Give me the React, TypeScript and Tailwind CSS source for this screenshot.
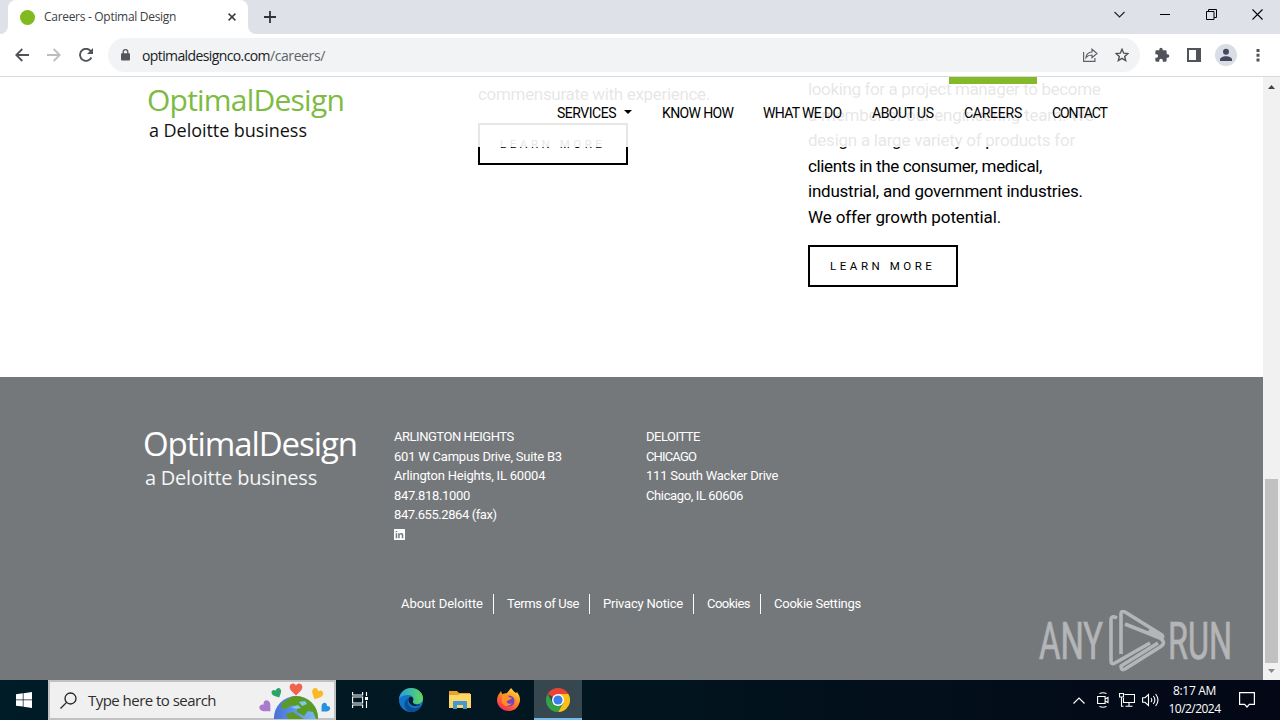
import React from 'react';

interface NavItem {
  label: string;
  className: string;
  caret?: boolean;
  active?: boolean;
}

const navItems: NavItem[] = [
  { label: 'SERVICES', className: 'w-[75px] tracking-[-0.48px]', caret: true },
  { label: 'KNOW HOW', className: 'w-[71px] tracking-[-0.63px]' },
  { label: 'WHAT WE DO', className: 'w-[79px] tracking-[-0.65px]' },
  { label: 'ABOUT US', className: 'w-[62px] tracking-[-0.5px]' },
  { label: 'CAREERS', className: 'w-[58px] tracking-[-0.25px]', active: true },
  { label: 'CONTACT', className: 'w-[55px] tracking-[-1.15px]' },
];

const projectManagerText = [
  { text: 'looking for a project manager to become', className: 'tracking-[-0.37px]' },
  { text: 'a member of our engineering team. We', className: 'tracking-[-0.22px]' },
  { text: 'design a large variety of products for', className: 'tracking-[-0.25px]' },
  { text: 'clients in the consumer, medical,', className: 'tracking-[-0.35px]' },
  { text: 'industrial, and government industries.', className: 'tracking-[-0.23px]' },
  { text: 'We offer growth potential.', className: 'tracking-[-0.11px]' },
];

const arlington = [
  { text: 'ARLINGTON HEIGHTS', className: 'tracking-[-0.47px]' },
  { text: '601 W Campus Drive, Suite B3', className: 'tracking-[-0.22px]' },
  { text: 'Arlington Heights, IL 60004', className: 'tracking-[-0.19px]' },
  { text: '847.818.1000', className: 'tracking-[-0.33px]' },
  { text: '847.655.2864 (fax)', className: 'tracking-[-0.42px]' },
];

const chicago = [
  { text: 'DELOITTE', className: 'tracking-[-0.48px]' },
  { text: 'CHICAGO', className: 'tracking-[-0.85px]' },
  { text: '111 South Wacker Drive', className: 'tracking-[-0.24px]' },
  { text: 'Chicago, IL 60606', className: 'tracking-[-0.38px]' },
];

const legalLinks = [
  { text: 'About Deloitte', className: 'w-[93px] border-r tracking-[-0.03px]' },
  { text: 'Terms of Use', className: 'w-[83px] border-r tracking-[-0.41px]' },
  { text: 'Privacy Notice', className: 'w-[91px] border-r tracking-[-0.22px]' },
  { text: 'Cookies', className: 'w-[54px] border-r tracking-[-0.52px]' },
  { text: 'Cookie Settings', className: 'w-[88px] tracking-[-0.24px]' },
];

const TabStrip = () => (
  <div className="flex h-[34px] shrink-0 bg-[#dee1e8] pl-2">
    <div className="relative flex w-[240px] items-center rounded-t-lg bg-white pl-[12px]">
      <svg className="absolute -left-2 bottom-0 h-2 w-2" viewBox="0 0 8 8">
        <path d="M8 0v8H0a8 8 0 0 0 8-8z" fill="#fff" />
      </svg>
      <svg className="absolute -right-2 bottom-0 h-2 w-2" viewBox="0 0 8 8">
        <path d="M0 0v8h8a8 8 0 0 1-8-8z" fill="#fff" />
      </svg>
      <span className="h-[15px] w-[15px] rounded-full bg-[#7fba1e]" />
      <span className="ml-[9px] w-[184px] text-xs tracking-[-0.3px] whitespace-nowrap text-[#3c4043]">Careers - Optimal Design</span>
      <svg className="h-2 w-2" viewBox="0 0 8 8" stroke="#3c4043" strokeWidth="1.5">
        <path d="M.6.6l6.8 6.8M7.4.6L.6 7.4" />
      </svg>
    </div>
    <svg className="mt-[11px] ml-4 h-3 w-3" viewBox="0 0 12 12" stroke="#303338" strokeWidth="1.8">
      <path d="M6 0v12M0 6h12" />
    </svg>
    <div className="mt-[9px] ml-auto flex h-[11px] items-center pr-[17px]">
      <svg className="h-[11px] w-[11px]" viewBox="0 0 11 11" fill="none" stroke="#222" strokeWidth="1.1">
        <path d="M.5 3l5 5 5-5" />
      </svg>
      <svg className="ml-[35px] h-[11px] w-[10px]" viewBox="0 0 10 11">
        <path d="M0 5h10v1H0z" />
      </svg>
      <svg className="ml-[36px] h-[11px] w-[11px]" viewBox="0 0 11 11" fill="none" stroke="#000">
        <path d="M.5 2.5H8v8H.5zM2.5 2.5v-2h8v8H8" />
      </svg>
      <svg className="ml-[35px] h-[11px] w-[11px]" viewBox="0 0 11 11" stroke="#000" strokeWidth="1.1">
        <path d="M.5.5l10 10M10.5.5l-10 10" />
      </svg>
    </div>
  </div>
);

const Toolbar = () => (
  <div className="flex h-[43px] shrink-0 items-center border-b border-[#d8dadc] bg-white pl-[15px]">
    <svg className="h-[14px] w-[14px]" viewBox="0 0 14 14" fill="none" stroke="#505357" strokeWidth="1.8">
      <path d="M14 7H1.5M7.3 1l-6 6 6 6" />
    </svg>
    <svg className="ml-[18px] h-[14px] w-[14px]" viewBox="0 0 14 14" fill="none" stroke="#bbbdc0" strokeWidth="1.8">
      <path d="M0 7h12.5M6.7 1l6 6-6 6" />
    </svg>
    <svg className="ml-[18px] h-[14px] w-[14px]" viewBox="0 0 14 14" fill="none" stroke="#505357" strokeWidth="1.9">
      <path d="M12.4 9.5A6 6 0 1 1 11.5 2.8l1 1.2" />
      <path d="M14 0v6H8z" fill="#505357" stroke="none" />
    </svg>
    <div className="ml-[15px] flex h-[34px] w-[1032px] items-center rounded-full bg-[#f1f3f4] pl-[13px]">
      <svg className="h-[12px] w-[9px]" viewBox="0 0 9 12">
        <path d="M2.2 5V3a2.3 2.3 0 0 1 4.6 0v2" fill="none" stroke="#53565a" strokeWidth="1.3" />
        <rect y="4.3" width="9" height="7.3" rx="1" fill="#53565a" />
      </svg>
      <span className="ml-[12px] w-[940px] text-[14px] whitespace-nowrap text-[#5f6368]">
        <span className="tracking-[-0.61px] text-[#202124]">optimaldesignco.com</span>
        <span className="tracking-[-0.4px]">/careers/</span>
      </span>
      <svg className="ml-[1px] h-[14px] w-[15px] shrink-0" viewBox="0 0 15 14" fill="none" stroke="#5f6368" strokeWidth="1.2">
        <path d="M.6 4v9.3h11.3V10" />
        <path d="M3 9.500c.4-3.500 2.500-5.300 6-5.500V1.200l5 4.300-5 4.200V7c-2.800 0-4.500.7-6 2.500z" />
      </svg>
      <svg className="ml-[17px] h-[14px] w-[14px] shrink-0" viewBox="0 0 14 14" fill="none" stroke="#505357" strokeWidth="1.4">
        <path d="M7 1.300l1.700 3.900 4.200.4-3.200 2.800 1 4.200L7 10.400l-3.700 2.200 1-4.200L1.100 5.600l4.200-.4z" />
      </svg>
    </div>
    <svg className="ml-[14px] h-[16px] w-[16px]" viewBox="0 0 24 24" fill="#505357">
      <path d="M20.500 11H19V7a2 2 0 0 0-2-2h-4V3.500a2.500 2.500 0 0 0-5 0V5H4a2 2 0 0 0-2 2v3.800h1.500a2.700 2.700 0 0 1 0 5.400H2V20a2 2 0 0 0 2 2h3.800v-1.500a2.700 2.700 0 0 1 5.400 0V22H17a2 2 0 0 0 2-2v-4h1.500a2.500 2.500 0 0 0 0-5z" />
    </svg>
    <svg className="ml-[17px] h-[14px] w-[14px]" viewBox="0 0 14 14">
      <path d="M0 0h14v14H0zM2 2v10h7V2z" fill="#505357" fillRule="evenodd" />
    </svg>
    <svg className="ml-[14px] h-[22px] w-[22px]" viewBox="0 0 22 22">
      <circle cx="11" cy="11" r="11" fill="#dadce6" />
      <circle cx="11" cy="7.700" r="3" fill="#43485c" />
      <path d="M5 17v-1.500c0-2 3-3.300 6-3.300s6 1.300 6 3.300V17z" fill="#43485c" />
    </svg>
    <svg className="ml-[19px] h-[14px] w-[4px]" viewBox="0 0 4 14" fill="#505357">
      <path d="M.5 1h3v3h-3zM.5 5.800h3v3h-3zM.5 10.500h3v3h-3z" />
    </svg>
  </div>
);

const SiteHeader = () => (
  <header className="absolute inset-x-0 top-0 flex h-[70px] bg-white/90">
    <div className="ml-[147px] w-[410px] font-['Open_Sans'] whitespace-nowrap">
      <div className="mt-[3px] text-[30px] leading-[40px] tracking-[-0.78px] text-[#7dbb42]">OptimalDesign</div>
      <div className="-mt-px ml-[2px] text-[18px] leading-[22px] tracking-[-0.05px] text-[#111]">a Deloitte business</div>
    </div>
    <nav className="flex gap-[30px] text-[14px] leading-[20px]">
      {navItems.map(item => (
        <a key={item.label} className={`relative flex pt-[26px] whitespace-nowrap ${item.className}`}>
          {item.active && <span className="absolute top-0 -left-[15px] h-[7px] w-[88px] bg-[#86b92a]" />}
          {item.label}
          {item.caret && (
            <svg className="mt-[7px] ml-auto h-1 w-2" viewBox="0 0 8 4">
              <path d="M0 0h8L4 4z" />
            </svg>
          )}
        </a>
      ))}
    </nav>
  </header>
);

const LearnMore = () => (
  <div className="mt-[15px] flex h-[42px] w-[150px] items-center border-2 border-black pt-[2px] pl-[20px] text-[11.5px] tracking-[3.55px] whitespace-nowrap">
    LEARN MORE
  </div>
);

const FooterLogo = () => (
  <div className="-mt-[5px] w-[250px] font-['Open_Sans'] whitespace-nowrap">
    <div className="-ml-px text-[33px] leading-[44px] tracking-[-1.07px]">OptimalDesign</div>
    <div className="ml-[1px] text-[20px] leading-[24px] tracking-[-0.24px] text-[#f4f5f5]">a Deloitte business</div>
  </div>
);

const Footer = () => (
  <footer className="h-[303px] bg-[#75787b] pt-[50px] text-[13px] leading-[19.5px] text-white">
    <div className="flex h-[167px] pl-[144px]">
      <FooterLogo />
      <div className="w-[252px]">
        {arlington.map(line => (
          <div key={line.text} className={`whitespace-nowrap ${line.className}`}>{line.text}</div>
        ))}
        <svg className="mt-[4px] h-[11px] w-[11px]" viewBox="0 0 11 11">
          <rect width="11" height="11" rx=".6" fill="#fff" />
          <path d="M1.700 4.200h1.500v5H1.700zM1.700 1.900h1.500v1.400H1.700zM4.200 4.200h1.400v.7c.9-1.300 3.700-1.200 3.700 1.200v3.100H7.800V6.500c0-1.500-2.100-1.400-2.100 0v2.700H4.200z" fill="#75787b" />
        </svg>
      </div>
      <div>
        {chicago.map(line => (
          <div key={line.text} className={`whitespace-nowrap ${line.className}`}>{line.text}</div>
        ))}
      </div>
    </div>
    <div className="flex gap-[13px] pl-[401px]">
      {legalLinks.map(link => (
        <a key={link.text} className={`h-[20px] border-white whitespace-nowrap ${link.className}`}>{link.text}</a>
      ))}
    </div>
  </footer>
);

const Watermark = () => (
  <svg className="absolute right-[47px] bottom-[8px] h-[62px] w-[196px] opacity-45" viewBox="0 0 196 62" fill="none" stroke="#fff">
    <g fill="#fff" strokeWidth=".7" fontFamily="Roboto, sans-serif" fontSize="52">
      <text x="2" y="49" textLength="64" lengthAdjust="spacingAndGlyphs">ANY</text>
      <text x="131" y="49" textLength="64" lengthAdjust="spacingAndGlyphs">RUN</text>
    </g>
    <path
      strokeWidth="3.600"
      strokeLinejoin="round"
      d="M80 8Q74 5 74 10V51Q74 55 78 53L113 33M84 44V4Q84 0 88 2L125 25Q127 28 123 28L88 14M112 20L123 28Q130 33 123 37L88 59Q84 61 84 56L121 33"
    />
  </svg>
);

const Scrollbar = () => (
  <div className="flex w-[17px] flex-col items-center bg-[#f1f1f1]">
    <svg className="mt-[8px] h-[4px] w-[7px]" viewBox="0 0 7 4">
      <path d="M3.500 0L7 4H0z" fill="#444" />
    </svg>
    <div className="mt-[390px] h-[184px] w-[13px] bg-[#c1c1c1]" />
    <svg className="mt-[6px] h-[4px] w-[7px]" viewBox="0 0 7 4">
      <path d="M3.500 4L7 0H0z" fill="#8a8a8a" />
    </svg>
  </div>
);

const hearts = [
  { color: '#2ea366', transform: 'translate(18 11) rotate(-25) scale(.78)' },
  { color: '#f0634d', transform: 'translate(37 7)' },
  { color: '#fbb928', transform: 'translate(58 12) rotate(25) scale(.9)' },
  { color: '#a97bd0', transform: 'translate(7 25) rotate(-45) scale(.95)' },
  { color: '#2591e0', transform: 'translate(66 26) rotate(45) scale(.75)' },
];

const Globe = () => (
  <svg className="ml-auto h-[37px] w-[74px]" viewBox="0 0 74 37">
    <defs>
      <clipPath id="globe">
        <circle cx="37" cy="36" r="22" />
      </clipPath>
      <linearGradient id="ocean" x1="0" x2="1">
        <stop offset="0" stopColor="#4870d8" />
        <stop offset="1" stopColor="#79bdf3" />
      </linearGradient>
    </defs>
    <circle cx="37" cy="36" r="22" fill="url(#ocean)" />
    <g clipPath="url(#globe)" fill="#5b9b25">
      <path d="M23 21l12-8 14 1 11 10 3 13h-6l-3-7-5-1-4 5-7-4v-4l-5-3-7 4-4-1z" />
      <path d="M27 32l7-2 6 4 5 3H29z" />
      <path d="M40 20l6-1 2 3-5 2zM32 25l7-2 3 3-5 1z" fill="#82c4f4" />
    </g>
    {hearts.map(heart => (
      <path key={heart.color} d="M0 6.500L-5 1.500C-9-4-3-8 0-3.500 3-8 9-4 5 1.500z" fill={heart.color} transform={heart.transform} />
    ))}
  </svg>
);

const Taskbar = () => (
  <div className="flex h-10 shrink-0 items-center bg-gradient-to-r from-[#001c26] via-[#02151f] to-[#030716] text-white">
    <svg className="ml-4 h-4 w-4" viewBox="0 0 16 16" fill="#fff">
      <path d="M0 2.200l6.800-.9v6.200H0zM7.500 1.200L16 0v7.500H7.500zM0 8.300h6.800v6.200L0 13.700zM7.500 8.300H16V16l-8.500-1.200z" />
    </svg>
    <div className="ml-4 flex h-10 w-[288px] items-center border-2 border-[#bfc1c2] bg-[#f0f0f0] pr-[1px] pl-[10px]">
      <svg className="h-[17px] w-[17px]" viewBox="0 0 17 17" fill="none" stroke="#222" strokeWidth="1.300">
        <circle cx="10.500" cy="6.500" r="5.500" />
        <path d="M6.600 10.400L.5 16.500" />
      </svg>
      <span className="ml-[11px] text-[15px] tracking-[-0.53px] whitespace-nowrap text-[#2e2e2e]">Type here to search</span>
      <Globe />
    </div>
    <svg className="ml-4 h-4 w-4" viewBox="0 0 16 16" fill="none" stroke="#fff" strokeWidth="1.100">
      <path d="M.6 0v3h10V0M.6 5h10v6H.6zM.6 16v-3h10v3M14.500 0v4M14.500 9v7" />
      <path d="M13 5h3v3h-3z" fill="#fff" stroke="none" />
    </svg>
    {/* Edge */}
    <svg className="ml-[31px] h-6 w-6" viewBox="0 0 24 24">
      <defs>
        <linearGradient id="edgeTop" x1="0" x2="1">
          <stop offset="0" stopColor="#229fdc" />
          <stop offset="1" stopColor="#62d85c" />
        </linearGradient>
      </defs>
      <circle cx="12" cy="12" r="12" fill="#1273ca" />
      <path d="M0 11C1 4 6 0 12 0c7 0 12 5 12 10 0 4-3 6-6 6-3 0-5-1-4-3 2-3-1-6-5-6-4 0-7 1-9 4z" fill="url(#edgeTop)" />
      <path d="M9.500 10c-3 6 2 11 8 10 2 0 4-2 5-3-2 5-6 7-10 7C5 24 3 13 9.500 10z" fill="#0c4f91" />
      <path d="M14 13c1-3-1-5-3.500-4-2 2-1 7 3 8.500 3 1 6 .5 8-1.200-4 1.200-8.500-.3-7.500-3.300z" fill="#03202d" />
    </svg>
    {/* File Explorer */}
    <svg className="ml-[26px] h-[18px] w-[22px]" viewBox="0 0 22 18">
      <path d="M0 0h8l2 2h11v4H0z" fill="#e9a32a" />
      <path d="M0 4h9l2-1h11v14H0z" fill="#fcd667" />
      <path d="M4 18v-7q0-1 1-1h12q1 0 1 1v7h-4v-4H8v4z" fill="#4099d5" />
    </svg>
    {/* Firefox */}
    <svg className="ml-[26px] h-6 w-6" viewBox="0 0 24 24">
      <defs>
        <linearGradient id="fox" x1=".8" y1="0" x2=".2" y2="1">
          <stop offset="0" stopColor="#ffe442" />
          <stop offset=".45" stopColor="#ff8a22" />
          <stop offset="1" stopColor="#f5215b" />
        </linearGradient>
      </defs>
      <path d="M2 6l2-3 1 3 5-1 4-5c2 2 3 4 5 5l1-1c3 4 4 8 2 12-2 5-6 7-10 7-7 0-12-5-12-11 0-2 1-5 2-6z" fill="url(#fox)" />
      <circle cx="12" cy="13" r="5.500" fill="#7541c9" />
      <path d="M5 8c3-2 6-1 7 1l3 1c-1 2-4 2-5 3-1 2 2 4 5 2-2 4-9 4-10-1z" fill="#ff8f25" />
    </svg>
    {/* Chrome */}
    <div className="ml-[13px] flex h-10 w-12 items-center justify-center border-b-2 border-[#76b9ed] bg-[#37474f]">
      <svg className="mt-[2px] h-6 w-6" viewBox="0 0 24 24">
        <path d="M12 12L1.600 6A12 12 0 0 1 22.400 6z" fill="#ea4335" />
        <path d="M12 12V6h10.400A12 12 0 0 1 12 24l5.200-9z" fill="#fbc116" />
        <path d="M1.600 6A12 12 0 0 0 12 24l5.200-9L12 12l-5.200 3z" fill="#34a047" />
        <circle cx="12" cy="12" r="6" fill="#fff" />
        <circle cx="12" cy="12" r="4.600" fill="#3b7ded" />
      </svg>
    </div>
    <svg className="ml-auto h-[7px] w-3" viewBox="0 0 12 7" fill="none" stroke="#fff" strokeWidth="1.200">
      <path d="M.5 6.500L6 1l5.500 5.500" />
    </svg>
    <svg className="ml-[12px] h-4 w-3" viewBox="0 0 12 16" fill="none" stroke="#fff" strokeWidth="1.100">
      <path d="M2.500 1.500Q6 0 9.500 1.500M2.500 14.500Q6 16 9.500 14.500M.6 4.500h7.500v7H.6zM8.100 7l2.900-1.500v5L8.100 9" />
    </svg>
    <svg className="ml-[10px] h-[14px] w-4" viewBox="0 0 16 14" fill="none" stroke="#fff" strokeWidth="1.100">
      <path d="M5.500 1.500h10v8h-11V5M10 9.500V13M6.500 13.300h7M.5.500h4v3.500h-4zM2.500 4v9.300h2" />
    </svg>
    <svg className="ml-[7px] h-[14px] w-[17px]" viewBox="0 0 17 14" fill="none" stroke="#fff" strokeWidth="1.100">
      <path d="M.6 4.700h2.400L6.500 1.500v11L3 9.300H.6zM9 5q1.600 2 0 4M11.300 3q3.200 4 0 8M13.600 1q4.800 6 0 12" />
    </svg>
    <div className="ml-[9px] w-[53px] text-center text-xs leading-[18px] whitespace-nowrap">
      <div className="tracking-[-0.32px]">8:17 AM</div>
      <div className="tracking-[-0.54px]">10/2/2024</div>
    </div>
    <svg className="mr-[25px] ml-[18px] h-4 w-4" viewBox="0 0 16 16" fill="none" stroke="#fff" strokeWidth="1.200">
      <path d="M.6.6h14.800v11.800h-5L8 15l-2.400-2.600h-5z" />
    </svg>
  </div>
);

export default function App() {
  return (
    <div className="flex h-[720px] w-[1280px] flex-col overflow-hidden bg-white font-['Open_Sans',sans-serif]">
      <TabStrip />
      <Toolbar />
      <div className="relative flex h-[603px]">
        <main className="relative w-[1263px] overflow-hidden font-['Roboto',sans-serif] text-black">
          <div className="flex h-[300px] items-start overflow-hidden pl-[478px] text-[17px] leading-[25.5px] whitespace-nowrap">
            <div className="-mt-[21px] w-[330px]">
              <p>Benefits and annual salary are</p>
              <p className="pb-px tracking-[-0.32px]">commensurate with experience.</p>
              <LearnMore />
            </div>
            <div>
              {projectManagerText.map(line => (
                <p key={line.text} className={line.className}>{line.text}</p>
              ))}
              <LearnMore />
            </div>
          </div>
          <Footer />
          <SiteHeader />
        </main>
        <Scrollbar />
        <Watermark />
      </div>
      <Taskbar />
    </div>
  );
}
